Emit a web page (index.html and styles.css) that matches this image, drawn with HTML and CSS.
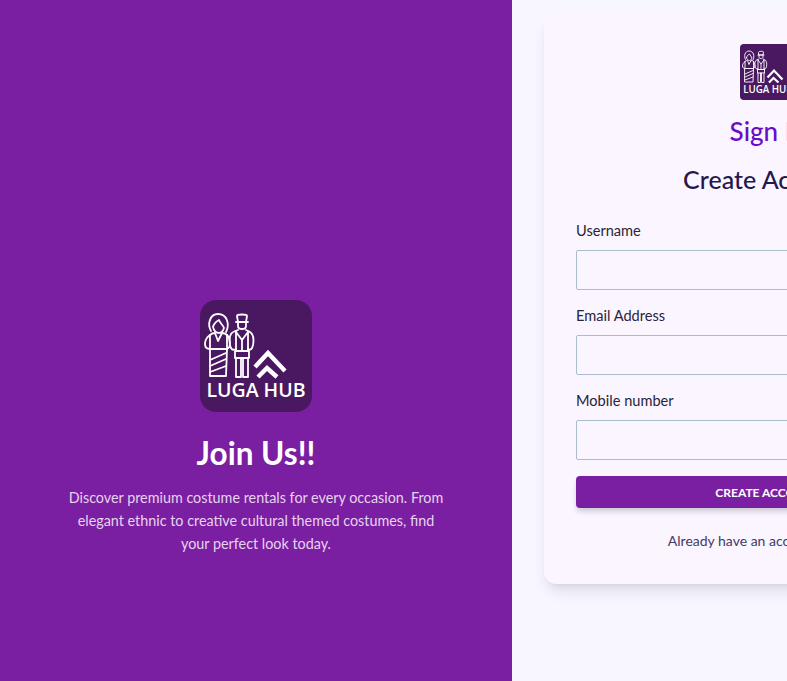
FILE: index.html
```html
<!DOCTYPE html>
<html lang="en">
<head>
    <meta charset="UTF-8">
    <meta name="viewport" content="width=device-width, initial-scale=1.0">
    <title>Luga Hub - Sign In</title>
    <link rel="stylesheet" href="styles.css">
</head>
<body>
    <svg class="sprite" width="0" height="0">
        <symbol id="luga-logo" viewBox="0 0 112 112">
            <rect width="112" height="112" fill="#4a1860"/>
            <g fill="none" stroke="#fff" stroke-width="1.8" stroke-linejoin="round" stroke-linecap="round">
                <!-- woman -->
                <path d="M11 31c-4-7-1-17 7-17 9 0 12 10 8 18"/>
                <path d="M13 27c1-4 4-6 6-7 1 3 4 5 5 8-1 3-3 5-5 5-3 0-5-2-6-6z"/>
                <path d="M10 35c-3 2-5 6-5 9 0 3 2 5 5 5M27 35c2 2 3 6 3 9 0 3-1 4-3 5"/>
                <path d="M10 35c2-2 4-2 5-2l3 8 4-8c2 0 4 1 5 2M10 35v14h17V35"/>
                <path d="M10 49h17l-1 27H10z"/>
                <path d="M10 60l16-7M10 66l16-7M10 72l16-6"/>
                <!-- man -->
                <path d="M38 22h8l1-6c0-2-10-2-10 0zM36 22h12"/>
                <path d="M38 22v4c0 4 8 4 8 0v-4"/>
                <path d="M36 32l6 8 6-8M38 30c-3 1-6 2-7 4-2 3-2 10 0 14 1 2 3 2 5 1M46 30c3 1 5 2 6 4 2 3 2 10 0 14-1 2-3 2-4 1"/>
                <path d="M36 32v19h12V32M42 40v11"/>
                <path d="M35 51h14M35 51v7h14v-7M36 58v19h5V58M43 58v19h5V58"/>
            </g>
            <!-- roof mark -->
            <path d="M55 67l13-14 17 18M58 77l9-9 10 9" fill="none" stroke="#fff" stroke-width="4.4"/>
            <text x="56" y="97" class="logo-text">LUGA HUB</text>
        </symbol>
    </svg>

    <div class="page">
        <aside class="intro">
            <svg class="intro-logo"><use href="#luga-logo"/></svg>
            <h2>Join Us!!</h2>
            <p>Discover premium costume rentals for every occasion. From elegant ethnic to creative cultural themed costumes, find your perfect look today.</p>
        </aside>

        <main class="signup">
            <form class="card">
                <svg class="card-logo"><use href="#luga-logo"/></svg>
                <div class="brand">Sign In</div>
                <h1>Create Account</h1>

                <div class="field">
                    <label for="username">Username</label>
                    <input id="username" type="text">
                </div>
                <div class="field">
                    <label for="email">Email Address</label>
                    <input id="email" type="email">
                </div>
                <div class="field">
                    <label for="mobile">Mobile number</label>
                    <input id="mobile" type="tel">
                </div>

                <button type="button">CREATE ACCOUNT</button>
                <p class="switch">Already have an account? Sign in</p>
            </form>
        </main>
    </div>
</body>
</html>
```

FILE: styles.css
```css
html, body {
    height: 100%;
    overflow: hidden;
}

body {
    font-family: 'Lato', 'Noto Sans', sans-serif;
    background-color: #f8f6ff;
    color: #2a2438;
    margin: 0;
}

.sprite {
    display: block;
    width: 0;
    height: 0;
}

.logo-text {
    font-family: 'Open Sans', sans-serif;
    font-size: 19.5px;
    font-weight: 600;
    fill: #fff;
    text-anchor: middle;
}

.page {
    display: flex;
    width: 1024px;
    height: 100%;
}

.intro {
    box-sizing: border-box;
    width: 512px;
    padding: 300px 66px 0;
    background-color: #7b1fa2;
    color: #fff;
    text-align: center;
}

.intro-logo {
    display: block;
    width: 112px;
    height: 112px;
    margin: 0 auto 23px;
    border-radius: 16px;
}

.intro h2 {
    margin: 0 0 16px;
    font-size: 31.5px;
    line-height: 36px;
    font-weight: 700;
}

.intro p {
    margin: 0;
    font-size: 14.35px;
    line-height: 22.75px;
    font-weight: 400;
    color: #e6d3ee;
}

.signup {
    flex: 1;
    padding: 12px 32px 0;
}

.card {
    box-sizing: border-box;
    width: 448px;
    height: 572px;
    padding: 32px 32px 0;
    background-color: #faf5ff;
    border-radius: 12px;
    box-shadow: 0 10px 15px -3px rgba(0, 0, 0, 0.1), 0 4px 6px -4px rgba(0, 0, 0, 0.1);
}

.card-logo {
    display: block;
    width: 56px;
    height: 56px;
    margin: 0 auto 15px;
    border-radius: 4px;
}

.brand {
    text-align: center;
    font-size: 26px;
    line-height: 32px;
    font-weight: 500;
    color: #6a0dc8;
}

.card h1 {
    margin: 16px 0 26px;
    text-align: center;
    font-size: 25px;
    line-height: 32px;
    font-weight: 500;
    color: #26174f;
}

.field {
    margin-bottom: 16px;
}

.field label {
    display: block;
    margin-bottom: 9px;
    font-size: 14.6px;
    line-height: 20px;
}

.field input {
    display: block;
    box-sizing: border-box;
    width: 100%;
    height: 40px;
    background: transparent;
    border: 1px solid #a9bdcc;
    border-radius: 2px;
}

button {
    display: block;
    width: 100%;
    height: 32px;
    border: none;
    border-radius: 4px;
    background-color: #7b1fa2;
    color: #fff;
    font-family: inherit;
    font-size: 12px;
    font-weight: 700;
    box-shadow: 0 4px 6px -1px rgba(0, 0, 0, 0.2);
}

.switch {
    margin: 23px 0 0;
    text-align: center;
    font-size: 14px;
    line-height: 20px;
    font-weight: 400;
    color: #453a63;
}
```
